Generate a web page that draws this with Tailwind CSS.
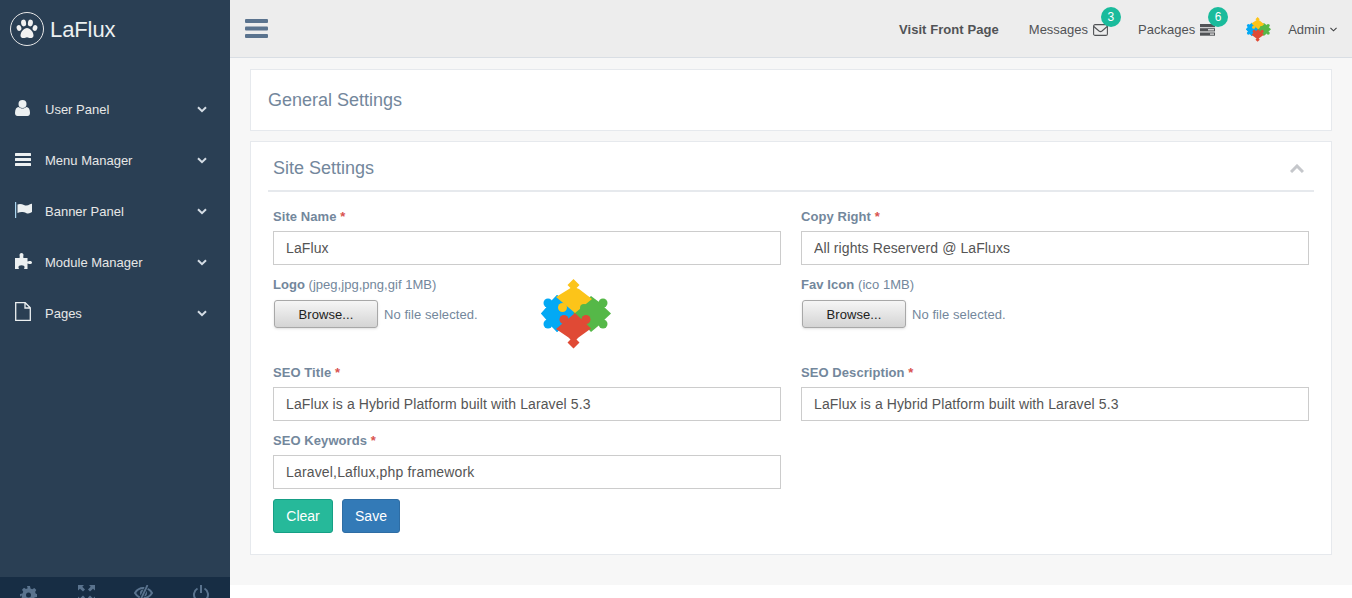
<!DOCTYPE html>
<html lang="en">
  <head>
    <meta charset="UTF-8" />
    <meta name="viewport" content="width=device-width, initial-scale=1.0" />
    <title>LaFlux - General Settings</title>
    <script src="https://cdn.jsdelivr.net/npm/@tailwindcss/browser@4"></script>
  </head>
  <body class="bg-white font-['Liberation_Sans',Arial,sans-serif] text-[13px] text-[#73879c]">
    <svg class="hidden">
      <symbol id="puzzle" viewBox="0 0 70 70">
        <g fill="#03a9f4">
          <path d="M16 16 37 34 16 53 0 34.500 5 29 8 24 8 45 5 40 0 34.500z"/>
          <path d="M16 16 37 34 16 53 6 43 6 26z"/>
          <path d="M0 34.500 8 26 8 43z"/>
          <circle cx="7" cy="24" r="4.500"/>
          <circle cx="7" cy="45" r="4.500"/>
        </g>
        <g fill="#55b848">
          <path d="M50 17 32 34 50 53 62 43 62 26z"/>
          <path d="M70 34.500 61 26 61 43z"/>
          <circle cx="62" cy="24" r="4.500"/>
          <circle cx="62" cy="45" r="4.500"/>
        </g>
        <g fill="#fcc419">
          <path d="M15 18 28 10 29.500 9 26.500 6 32.500 0 38.500 6 35.500 9 38 10 51 20 34 34z"/>
          <circle cx="21.500" cy="28.500" r="4.500"/>
        </g>
        <circle cx="43" cy="29" r="4" fill="#55b848"/>
        <g fill="#e04a35">
          <path d="M34 34 50 49.500 37.500 58.500 35.500 60.500 38.500 63.500 32.500 69.500 26.500 63.500 29.500 60.500 27.500 58.500 15 50z"/>
          <circle cx="23" cy="40.500" r="4.500"/>
          <circle cx="45" cy="40.500" r="4.500"/>
        </g>
      </symbol>
    </svg>

    <div class="flex h-[598px] overflow-hidden">
      <!-- Sidebar -->
      <aside class="w-[230px] shrink-0 bg-[#2a3f54] flex flex-col text-[#e7e7e7]">
        <div class="h-[84px] flex items-start pt-[12px] pl-[10px]">
          <div class="w-[34px] h-[34px] rounded-full border border-[#e7e7e7] flex items-center justify-center">
            <svg class="w-[22px] h-[20px]" viewBox="0 0 22 20" fill="#f2f2f2">
              <ellipse cx="3" cy="9" rx="2.3" ry="3" transform="rotate(-18 3 9)"/>
              <ellipse cx="7.6" cy="4" rx="2.5" ry="3.4" transform="rotate(-8 7.6 4)"/>
              <ellipse cx="14.4" cy="4" rx="2.5" ry="3.4" transform="rotate(8 14.4 4)"/>
              <ellipse cx="19" cy="9" rx="2.3" ry="3" transform="rotate(18 19 9)"/>
              <path d="M11 9c3 0 6.500 4 6.500 7.500 0 2-1.500 2.500-3 2.500-1.500 0-2.300-.8-3.500-.8s-2 .8-3.500.8c-1.500 0-3-.5-3-2.500C4.500 13 8 9 11 9z"/>
            </svg>
          </div>
          <span class="ml-[6px] text-[22px] leading-[36px] text-[#ecf0f1] tracking-[-0.1px]">LaFlux</span>
        </div>

        <nav class="flex-1">
          <a class="h-[51px] flex items-center pl-[15px] pr-[23px]">
            <span class="w-[30px]"><svg class="w-[15px] h-[16px] -mt-[3px]" viewBox="0 0 15 16" fill="#ecf0f1"><circle cx="7.500" cy="4" r="4"/><path d="M0 13c0-4 1.500-6 3.500-6 1 .8 2.500 1.500 4 1.500s3-.7 4-1.500c2 0 3.500 2 3.500 6 0 2-1 3-2.500 3h-10C1 16 0 15 0 13z"/></svg></span>
            <span class="flex-1">User Panel</span>
            <svg class="w-[10px] h-[7px]" viewBox="0 0 10 7" fill="none" stroke="#d5dde5" stroke-width="2"><path d="M1 1.200 5 5.200 9 1.200"/></svg>
          </a>
          <a class="h-[51px] flex items-center pl-[15px] pr-[23px]">
            <span class="w-[30px]"><svg class="w-[16px] h-[13px] -mt-[3px]" viewBox="0 0 16 13" fill="#ecf0f1"><rect width="16" height="3" rx=".5"/><rect y="5" width="16" height="3" rx=".5"/><rect y="10" width="16" height="3" rx=".5"/></svg></span>
            <span class="flex-1">Menu Manager</span>
            <svg class="w-[10px] h-[7px]" viewBox="0 0 10 7" fill="none" stroke="#d5dde5" stroke-width="2"><path d="M1 1.200 5 5.200 9 1.200"/></svg>
          </a>
          <a class="h-[51px] flex items-center pl-[15px] pr-[23px]">
            <span class="w-[30px]"><svg class="w-[18px] h-[16px] -mt-[3px]" viewBox="0 0 18 16" fill="#ecf0f1"><rect y="0" width="1.200" height="16" fill="#a9d4ee"/><path d="M2.500 2.500c2-1 4.500-.5 6.500.5s4 .5 6-.8c.8-.5 2-.7 2-.2V10c-2 1.500-4 2-6 1S5.500 9.500 2.500 11z"/></svg></span>
            <span class="flex-1">Banner Panel</span>
            <svg class="w-[10px] h-[7px]" viewBox="0 0 10 7" fill="none" stroke="#d5dde5" stroke-width="2"><path d="M1 1.200 5 5.200 9 1.200"/></svg>
          </a>
          <a class="h-[51px] flex items-center pl-[15px] pr-[23px]">
            <span class="w-[30px]"><svg class="w-[17px] h-[16px] -mt-[3px]" viewBox="0 0 17 16" fill="#ecf0f1"><path d="M0 5h4.500C5 3.500 4.500 2.500 4.500 2 4.500.7 5.500 0 6.500 0s2 .7 2 2c0 .5-.5 1.500 0 3H12.500v3.500c1.500-.5 2-.5 2.500-.5 1 0 2 .5 2 1.500s-1 1.500-2 1.500c-.5 0-1 0-2.500-.5V16H9c.5-1 .5-1.500.5-2 0-1-1-1.800-3-1.800s-3 .8-3 1.800c0 .5 0 1 .5 2H0z"/></svg></span>
            <span class="flex-1">Module Manager</span>
            <svg class="w-[10px] h-[7px]" viewBox="0 0 10 7" fill="none" stroke="#d5dde5" stroke-width="2"><path d="M1 1.200 5 5.200 9 1.200"/></svg>
          </a>
          <a class="h-[51px] flex items-center pl-[15px] pr-[23px]">
            <span class="w-[30px]"><svg class="w-[16px] h-[19px] -mt-[4px]" viewBox="0 0 16 19" fill="none" stroke="#ecf0f1" stroke-width="1.300"><path d="M.7.700h9.500l5.100 5.100v12.500H.7zM10 .7v5.300h5.300"/></svg></span>
            <span class="flex-1">Pages</span>
            <svg class="w-[10px] h-[7px]" viewBox="0 0 10 7" fill="none" stroke="#d5dde5" stroke-width="2"><path d="M1 1.200 5 5.200 9 1.200"/></svg>
          </a>
        </nav>

        <!-- Footer buttons, cut off by the window -->
        <div class="h-[21px] bg-[#172d44] flex overflow-hidden">
          <span class="flex-1 flex justify-center pt-[9px]"><svg class="w-[17px] h-[17px] shrink-0" viewBox="0 0 17 17" fill="#5a738e"><path d="M7 0h3l.5 2.500 1.700.7L14.300 2l2 2-1.200 2 .7 1.700L17 8v3l-2.500.5-.7 1.700 1.200 2-2 2-2-1.200-1.700.7L9 17H7l-.5-2.500-1.700-.7-2 1.200-2-2 1.200-2-.7-1.700L0 11V8l2.500-.5.7-1.700-1.200-2 2-2 2 1.200 1.700-.7z"/><circle cx="8.500" cy="9" r="2.500" fill="#172d44"/></svg></span>
          <span class="flex-1 flex justify-center pt-[8px]"><svg class="w-[17px] h-[17px] shrink-0" viewBox="0 0 17 17" fill="#5a738e"><path d="M0 0h6L4.300 1.700 7 4.400 5 6.400 2 3.700 0 5.500zM17 0v5.500l-2-1.800-3 2.700-2-2 2.700-2.700L11 0zM0 17v-5.500l2 1.800 3-2.700 2 2L4.300 15.300 6 17zM17 17h-6l1.700-1.700L10 12.600l2-2 3 2.700 2-1.800z"/></svg></span>
          <span class="flex-1 flex justify-center pt-[8px]"><svg class="w-[19px] h-[15px] shrink-0" viewBox="0 0 19 15" fill="none" stroke="#5a738e" stroke-width="2"><path d="M1 8c2-3.500 5-5 8.500-5s6.500 1.500 8.500 5c-2 3.500-5 5-8.500 5S3 11.500 1 8z"/><circle cx="9.500" cy="8" r="2.500" fill="#5a738e"/><path d="M13.500 0 6.500 15" stroke="#172d44" stroke-width="3.500"/><path d="M13.500 0 6.500 15" stroke-width="1.800"/></svg></span>
          <span class="flex-1 flex justify-center pt-[8px]"><svg class="w-[16px] h-[17px] shrink-0" viewBox="0 0 16 17" fill="none" stroke="#5a738e" stroke-width="2"><path d="M4.500 3.500a7 7 0 1 0 7 0M8 0v8"/></svg></span>
        </div>
      </aside>

      <!-- Main column -->
      <div class="flex-1 min-w-0">
        <header class="h-[58px] bg-[#ededed] border-b border-[#d9dee4] flex items-center pl-[15px] pr-[15px] text-[#515356]">
          <svg class="w-[23px] h-[19px] -mt-[1px]" viewBox="0 0 23 19" fill="#5a738e"><rect width="23" height="4" rx="1"/><rect y="7.500" width="23" height="4" rx="1"/><rect y="15" width="23" height="4" rx="1"/></svg>
          <div class="ml-auto flex items-center pt-[2px]">
            <a class="font-bold tracking-[0.07px]">Visit Front Page</a>
            <a class="relative ml-[30px] flex items-center">
              Messages
              <svg class="ml-[5px] w-[15px] h-[12px]" viewBox="0 0 15 12" fill="none" stroke="#515356" stroke-width="1.100"><rect x=".6" y=".6" width="13.800" height="10.800" rx="1.500"/><path d="M.8 2.500 6 7c1 .8 2 .8 3 0l5.200-4.500"/></svg>
              <span class="absolute -top-[13px] left-[72px] w-[20px] h-[20px] rounded-full bg-[#1abb9c] text-white text-[12px] flex items-center justify-center">3</span>
            </a>
            <a class="relative ml-[30px] flex items-center">
              Packages
              <svg class="ml-[5px] w-[15px] h-[12px]" viewBox="0 0 15 12" fill="#515356"><rect width="15" height="3.200"/><rect y="4.200" width="15" height="3.200"/><rect y="8.500" width="15" height="3.200"/><rect x="8" y="5.200" width="6" height="1.200" fill="#ededed"/><rect x="10" y="9.500" width="4" height="1.200" fill="#ededed"/></svg>
              <span class="absolute -top-[13px] left-[70px] w-[20px] h-[20px] rounded-full bg-[#1abb9c] text-white text-[12px] flex items-center justify-center">6</span>
            </a>
            <svg class="ml-[31px] w-[25px] h-[25px]"><use href="#puzzle"/></svg>
            <a class="ml-[17px]">Admin</a>
            <svg class="ml-[5px] w-[7px] h-[5px]" viewBox="0 0 8 5" fill="none" stroke="#404244" stroke-width="1.300"><path d="M.5.700 4 4 7.500.700"/></svg>
          </div>
        </header>

        <main class="h-[527px] bg-[#f7f7f7] px-5 pt-[11px]">
          <section class="h-[62px] bg-white border border-[#e6e9ed] flex items-center pl-[17px] text-[18px] text-[#73879c]">General Settings</section>

          <section class="mt-[10px] h-[414px] bg-white border border-[#e6e9ed] px-[17px]">
            <div class="h-[50px] border-b-2 border-[#e6e9ed] flex items-center justify-between pl-[5px] pr-[10px] pt-[4px] text-[18px]">
              <h2>Site Settings</h2>
              <svg class="w-[14px] h-[9px]" viewBox="0 0 14 9" fill="none" stroke="#c5c7cb" stroke-width="3"><path d="M1 8 7 2l6 6"/></svg>
            </div>

            <form class="px-[5px] pt-[17px] tracking-[0.07px]">
              <div class="grid grid-cols-2 gap-x-5 gap-y-3">
                <div>
                  <label class="block h-[22px] leading-[16px] font-bold">Site Name <span class="text-[#d9534f]">*</span></label>
                  <input value="LaFlux" class="w-full h-[34px] border border-[#ccc] px-3 text-sm tracking-[0.1px] text-[#555]" />
                </div>
                <div>
                  <label class="block h-[22px] leading-[16px] font-bold">Copy Right <span class="text-[#d9534f]">*</span></label>
                  <input value="All rights Reserverd @ LaFluxs" class="w-full h-[34px] border border-[#ccc] px-3 text-sm tracking-[0.1px] text-[#555]" />
                </div>

                <div class="h-[76px] flex">
                  <div class="w-[268px]">
                    <label class="block h-[23px] leading-[16px] tracking-[0.03px]"><b>Logo</b> (jpeg,jpg,png,gif 1MB)</label>
                    <div class="flex items-center">
                      <span class="ml-[1px] w-[104px] h-[28px] pt-[1px] rounded-[3px] border border-[#a8a8a8] bg-gradient-to-b from-[#f6f6f6] to-[#d4d4d4] shadow-sm flex items-center justify-center text-[#222]">Browse...</span>
                      <span class="ml-[6px] pt-[2px]">No file selected.</span>
                    </div>
                  </div>
                  <svg class="mt-[2px] w-[70px] h-[70px]"><use href="#puzzle"/></svg>
                </div>
                <div class="h-[76px]">
                  <label class="block h-[23px] leading-[16px]"><b>Fav Icon</b> (ico 1MB)</label>
                  <div class="flex items-center">
                    <span class="ml-[1px] w-[104px] h-[28px] pt-[1px] rounded-[3px] border border-[#a8a8a8] bg-gradient-to-b from-[#f6f6f6] to-[#d4d4d4] shadow-sm flex items-center justify-center text-[#222]">Browse...</span>
                    <span class="ml-[6px] pt-[2px]">No file selected.</span>
                  </div>
                </div>

                <div>
                  <label class="block h-[22px] leading-[16px] font-bold">SEO Title <span class="text-[#d9534f]">*</span></label>
                  <input value="LaFlux is a Hybrid Platform built with Laravel 5.3" class="w-full h-[34px] border border-[#ccc] px-3 text-sm tracking-[0.1px] text-[#555]" />
                </div>
                <div>
                  <label class="block h-[22px] leading-[16px] font-bold">SEO Description <span class="text-[#d9534f]">*</span></label>
                  <input value="LaFlux is a Hybrid Platform built with Laravel 5.3" class="w-full h-[34px] border border-[#ccc] px-3 text-sm tracking-[0.1px] text-[#555]" />
                </div>

                <div>
                  <label class="block h-[22px] leading-[16px] font-bold">SEO Keywords <span class="text-[#d9534f]">*</span></label>
                  <input value="Laravel,Laflux,php framework" class="w-full h-[34px] border border-[#ccc] px-3 text-sm tracking-[0.17px] text-[#555]" />
                </div>
              </div>

              <div class="mt-[10px] flex gap-[9px] text-sm tracking-normal text-white">
                <button type="button" class="w-[60px] h-[34px] rounded-[3px] bg-[#26b99a] border border-[#169f85]">Clear</button>
                <button type="button" class="w-[58px] h-[34px] rounded-[3px] bg-[#337ab7] border border-[#2e6da4]">Save</button>
              </div>
            </form>
          </section>
        </main>
      </div>
    </div>
  </body>
</html>
